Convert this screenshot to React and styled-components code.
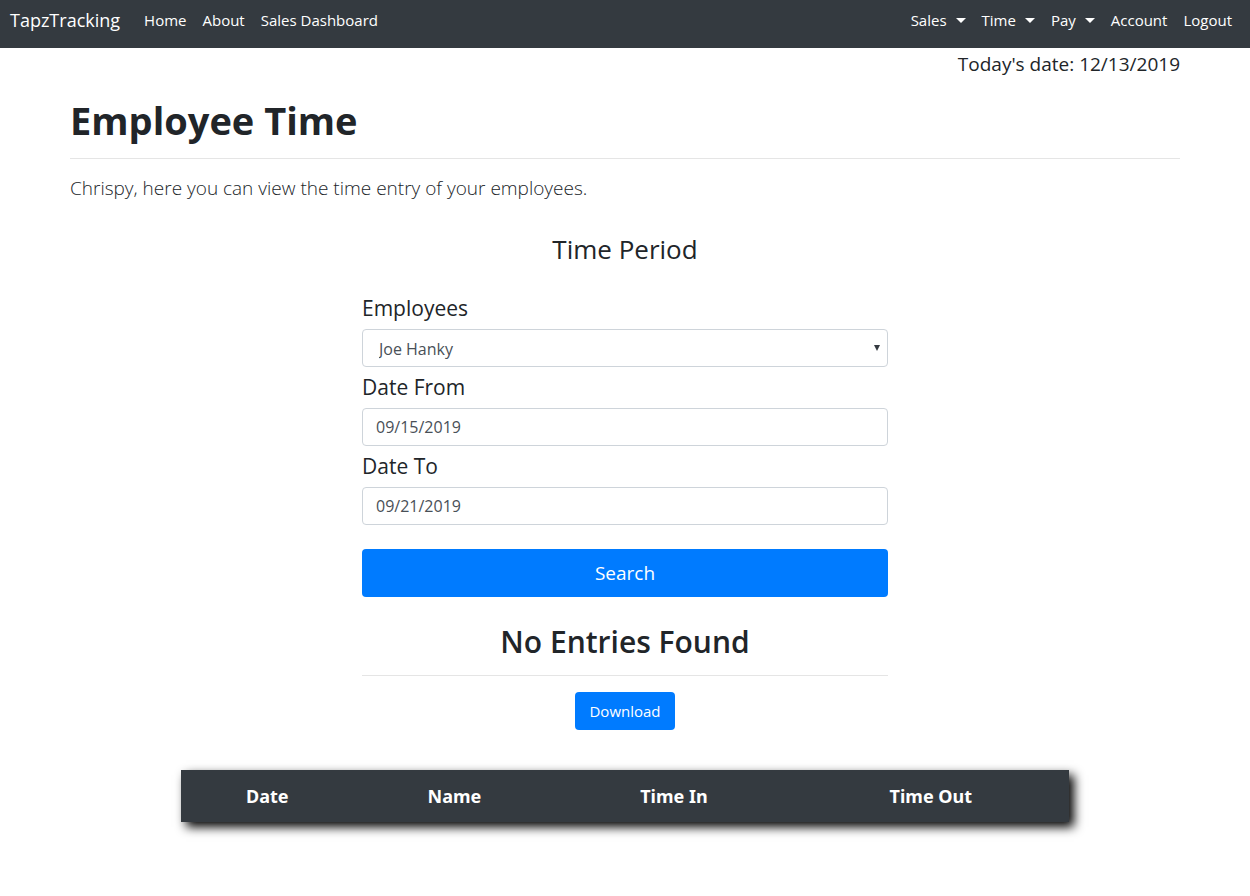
import React from "react";
import styled, { createGlobalStyle } from "styled-components";

const GlobalStyle = createGlobalStyle`
  *, *::before, *::after { box-sizing: border-box; }
  body {
    margin: 0;
    background: #fff;
    color: #212529;
    font-family: "Open Sans", "Noto Sans", sans-serif;
    font-size: 15px;
    line-height: 24px;
  }
`;

const NavBar = styled.nav`
  display: flex;
  align-items: center;
  gap: 16px;
  height: 48px;
  padding: 0 10px 8px;
  background: #343a40;
`;

const Brand = styled.a`
  color: #fff;
  font-size: 18px;
  text-decoration: none;
`;

const NavGroup = styled.div`
  display: flex;
  align-items: center;
  margin-left: ${(p) => (p.$end ? "auto" : "0")};
`;

const NavLink = styled.a`
  display: flex;
  align-items: center;
  gap: 9px;
  padding: 0 8px;
  color: #fff;
  text-decoration: none;
`;

const NavCaret = styled.span`
  border-top: 5px solid #fff;
  border-left: 5px solid transparent;
  border-right: 5px solid transparent;
`;

const Container = styled.main`
  max-width: 1140px;
  margin: 0 auto;
  padding: 0 15px 40px;
`;

const Today = styled.div`
  padding-top: 1px;
  font-size: 19px;
  line-height: 30px;
  text-align: right;
`;

const Title = styled.h1`
  margin: 17px 0 14px;
  font-size: 38px;
  font-weight: 700;
  line-height: 48px;
`;

const Rule = styled.hr`
  margin: 0;
  border: 0;
  border-top: 1px solid #e5e5e5;
`;

const Lead = styled.p`
  margin: 14px 0 0;
  font-size: 19px;
  font-weight: 300;
  line-height: 30px;
`;

const Column = styled.div`
  width: calc(50% - 29px);
  margin: 0 auto;
`;

const Legend = styled.h2`
  margin: 29px 0 22px;
  font-size: 26px;
  font-weight: 400;
  line-height: 34px;
  text-align: center;
`;

const Label = styled.label`
  display: block;
  padding: 6px 0;
  font-size: 21px;
  line-height: 29px;
`;

const fieldLook = `
  display: block;
  width: 100%;
  height: 38px;
  border: 1px solid #ced4da;
  border-radius: 4px;
  background: #fff;
  color: #495057;
  font-family: inherit;
  font-size: 16px;
`;

const TextInput = styled.input`
  ${fieldLook}
  padding: 6px 13px;
`;

const SelectBox = styled.div`
  position: relative;
`;

const Select = styled.select`
  ${fieldLook}
  appearance: none;
  padding: 4px 16px 2px;
`;

const SelectArrow = styled.svg`
  position: absolute;
  top: 16px;
  right: 8px;
  width: 6px;
  height: 6px;
  fill: #343a40;
  pointer-events: none;
`;

const Button = styled.button`
  display: block;
  width: ${(p) => (p.$block ? "100%" : "auto")};
  height: ${(p) => (p.$block ? "48px" : "38px")};
  margin: ${(p) => (p.$block ? "24px 0 0" : "16px auto 0")};
  padding: 0 14px;
  border: 0;
  border-radius: 4px;
  background: #007bff;
  color: #fff;
  font-family: inherit;
  font-size: ${(p) => (p.$block ? "19px" : "15px")};
`;

const Result = styled.h2`
  margin: 25px 0 14px;
  font-size: 30px;
  font-weight: 600;
  line-height: 39px;
  text-align: center;
`;

const Entries = styled.table`
  width: 80%;
  margin: 40px auto 0;
  border-collapse: collapse;
  background: #343a40;
  box-shadow: 5px 5px 10px #000;
  color: #fff;
`;

const HeadCell = styled.th`
  height: 52px;
  padding: 0 12px;
  font-family: "Noto Sans", "Open Sans", sans-serif;
  font-size: 18px;
  font-weight: 700;
  text-align: center;
`;

export default function App() {
  return (
    <>
      <GlobalStyle />
      <NavBar>
        <Brand href="#">TapzTracking</Brand>
        <NavGroup>
          {["Home", "About", "Sales Dashboard"].map((name) => (
            <NavLink key={name} href="#">{name}</NavLink>
          ))}
        </NavGroup>
        <NavGroup $end>
          {["Sales", "Time", "Pay"].map((name) => (
            <NavLink key={name} href="#">
              {name}
              <NavCaret />
            </NavLink>
          ))}
          <NavLink href="#">Account</NavLink>
          <NavLink href="#">Logout</NavLink>
        </NavGroup>
      </NavBar>
      <Container>
        <Today>Today's date: 12/13/2019</Today>
        <Title>Employee Time</Title>
        <Rule />
        <Lead>Chrispy, here you can view the time entry of your employees.</Lead>
        <Column>
          <form onSubmit={(e) => e.preventDefault()}>
            <Legend>Time Period</Legend>
            <Label htmlFor="employee">Employees</Label>
            <SelectBox>
              <Select id="employee" defaultValue="Joe Hanky">
                <option>Joe Hanky</option>
              </Select>
              <SelectArrow viewBox="0 0 6 6" aria-hidden="true">
                <path d="M0 0H6L3 6Z" />
              </SelectArrow>
            </SelectBox>
            <Label htmlFor="from">Date From</Label>
            <TextInput id="from" type="text" defaultValue="09/15/2019" />
            <Label htmlFor="to">Date To</Label>
            <TextInput id="to" type="text" defaultValue="09/21/2019" />
            <Button $block type="submit">Search</Button>
          </form>
          <Result>No Entries Found</Result>
          <Rule />
          <Button type="button">Download</Button>
        </Column>
        <Entries>
          <thead>
            <tr>
              {["Date", "Name", "Time In", "Time Out"].map((name) => (
                <HeadCell key={name} scope="col">{name}</HeadCell>
              ))}
            </tr>
          </thead>
        </Entries>
      </Container>
    </>
  );
}
